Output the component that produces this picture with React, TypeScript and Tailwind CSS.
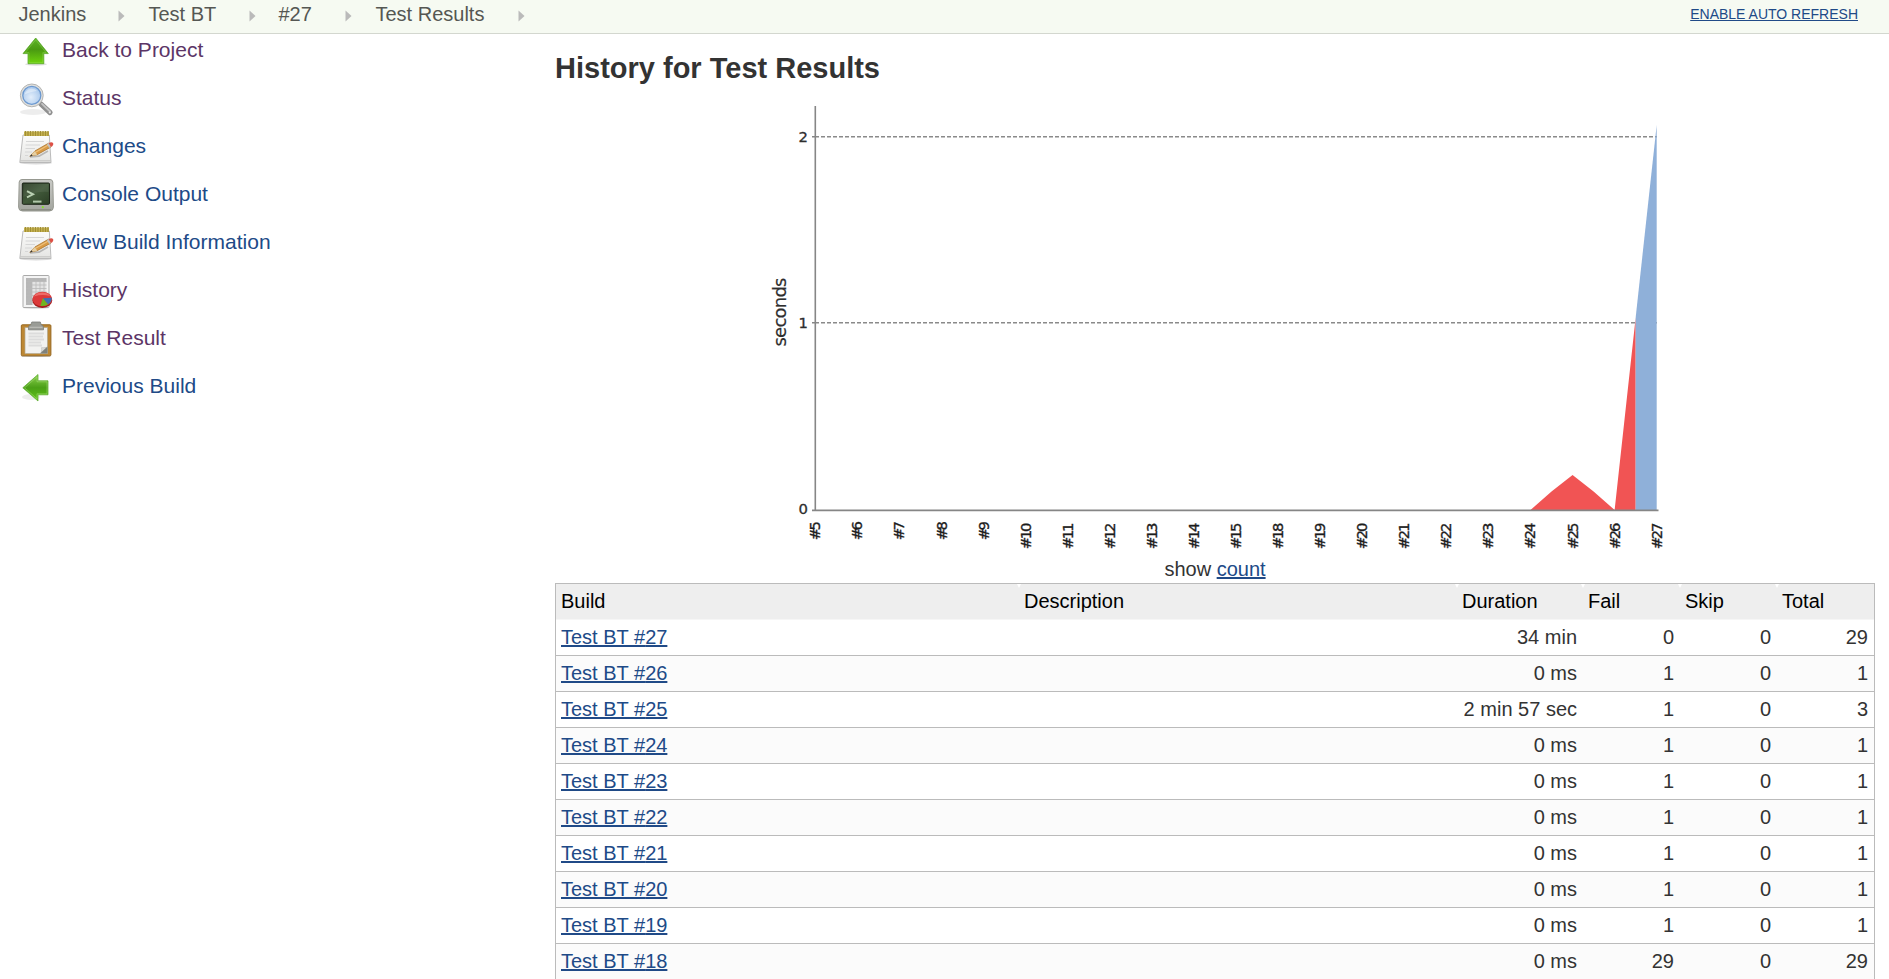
import type { ReactNode } from "react";

interface Build {
  id: number;
  duration: string;
  fail: number;
  skip: number;
  total: number;
}

const builds: Build[] = [
  { id: 27, duration: "34 min", fail: 0, skip: 0, total: 29 },
  { id: 26, duration: "0 ms", fail: 1, skip: 0, total: 1 },
  { id: 25, duration: "2 min 57 sec", fail: 1, skip: 0, total: 3 },
  { id: 24, duration: "0 ms", fail: 1, skip: 0, total: 1 },
  { id: 23, duration: "0 ms", fail: 1, skip: 0, total: 1 },
  { id: 22, duration: "0 ms", fail: 1, skip: 0, total: 1 },
  { id: 21, duration: "0 ms", fail: 1, skip: 0, total: 1 },
  { id: 20, duration: "0 ms", fail: 1, skip: 0, total: 1 },
  { id: 19, duration: "0 ms", fail: 1, skip: 0, total: 1 },
  { id: 18, duration: "0 ms", fail: 29, skip: 0, total: 29 },
];

const chartBuilds = [5, 6, 7, 8, 9, 10, 11, 12, 13, 14, 15, 18, 19, 20, 21, 22, 23, 24, 25, 26, 27];

function Icon({ children }: { children: ReactNode }) {
  return (
    <svg width="36" height="36" viewBox="0 0 36 36" className="shrink-0">
      {children}
    </svg>
  );
}

function UpIcon() {
  return (
    <Icon>
      <defs>
        <linearGradient id="up" x1="0" y1="0" x2="0" y2="1">
          <stop offset="0" stopColor="#5fb52a" />
          <stop offset="0.45" stopColor="#4a9a12" />
          <stop offset="1" stopColor="#6fd40c" />
        </linearGradient>
      </defs>
      <ellipse cx="18" cy="31.2" rx="11" ry="1.5" fill="#000" opacity="0.13" />
      <path d="M17.7 5 L30.3 20.6 H25.8 V30.7 H10 V20.6 H5 Z" fill="url(#up)" stroke="#5aa82a" strokeWidth="0.8" strokeLinejoin="round" />
      <path d="M17.7 6.8 L28 19.6 H24.8 V29.7 H11 V19.6 H7.3 Z" fill="none" stroke="#a2e26a" strokeWidth="0.7" opacity="0.5" />
    </Icon>
  );
}

function SearchIcon() {
  return (
    <Icon>
      <defs>
        <radialGradient id="lens" cx="0.45" cy="0.6" r="0.6">
          <stop offset="0" stopColor="#e3eefb" />
          <stop offset="1" stopColor="#a9c8ec" />
        </radialGradient>
      </defs>
      <ellipse cx="15" cy="31" rx="13" ry="3" fill="#000" opacity="0.07" />
      <path d="M22.5 22.7 L32 31.5" stroke="#8f8f8f" strokeWidth="5.2" strokeLinecap="round" />
      <path d="M24 22.8 L32 30.5" stroke="#c4c4c4" strokeWidth="1.8" strokeLinecap="round" />
      <circle cx="31.8" cy="31.5" r="1.1" fill="#e6e6e6" />
      <circle cx="13.8" cy="14.4" r="11.4" fill="#e0e0de" stroke="#b4b4b2" strokeWidth="1" />
      <circle cx="13.8" cy="14.4" r="9" fill="url(#lens)" stroke="#6c99d0" strokeWidth="1.3" />
      <path d="M6.8 13.4 C8 7.9 15 5.9 19 9.9 C15 10.4 10 11.4 6.8 13.4 Z" fill="#fff" opacity="0.4" />
    </Icon>
  );
}

function NotepadIcon() {
  return (
    <Icon>
      <defs>
        <linearGradient id="pad" x1="0" y1="0" x2="0" y2="1">
          <stop offset="0" stopColor="#fcfcfb" />
          <stop offset="1" stopColor="#e4e4e2" />
        </linearGradient>
      </defs>
      <ellipse cx="18" cy="34" rx="16" ry="1.5" fill="#000" opacity="0.15" />
      <path d="M5 6 H31.3 L33 33.5 H1.8 Z" fill="url(#pad)" stroke="#b4b4b4" strokeWidth="0.9" strokeLinejoin="round" />
      <path d="M2.2 31.8 H32.8" stroke="#c5c5c3" strokeWidth="1.1" />
      <path d="M8 12.5 H26 M7.5 16 H22 M7.5 19.5 H17 M7 23 H14 M7 26.5 H10" stroke="#d6d6d6" strokeWidth="1.1" />
      <path d="M6 2.5 H31 V7 H6 Z" fill="#c9b553" />
      <path d="M7.5 2 V7 M10 2 V7 M12.5 2 V7 M15 2 V7 M17.5 2 V7 M20 2 V7 M22.5 2 V7 M25 2 V7 M27.5 2 V7 M30 2 V7" stroke="#a08e33" strokeWidth="1.2" />
      <path d="M12 27.9 L21 27.2 L30 22" stroke="#000" strokeWidth="1.8" fill="none" opacity="0.22" />
      <path d="M11.8 27.2 L17 21.9 L30.8 14 L33 18 L19.2 25.7 Z" fill="#d99a45" stroke="#a56d22" strokeWidth="0.7" strokeLinejoin="round" />
      <path d="M18 22.9 L31.2 15.4" stroke="#efc27c" strokeWidth="1.1" />
      <path d="M11.8 27.2 L17 21.9 L19.2 25.7 Z" fill="#e6cfa2" />
      <path d="M11.6 27.4 L13.6 25.2 L14.6 26.7 Z" fill="#333" />
      <path d="M28.9 15.1 L30.8 14 L33 18 L31.1 19 Z" fill="#c2c2c2" />
      <path d="M30.8 14 Q33.8 12.3 35.2 14.2 Q35.8 16.5 33 18 Z" fill="#dd5046" />
    </Icon>
  );
}

function TerminalIcon() {
  return (
    <Icon>
      <defs>
        <linearGradient id="screen" x1="0" y1="0" x2="1" y2="1">
          <stop offset="0" stopColor="#2a3a24" />
          <stop offset="0.5" stopColor="#41593a" />
          <stop offset="1" stopColor="#2b3e25" />
        </linearGradient>
        <linearGradient id="bezel" x1="0" y1="0" x2="0" y2="1">
          <stop offset="0" stopColor="#c9cac6" />
          <stop offset="1" stopColor="#a3a59f" />
        </linearGradient>
      </defs>
      <path d="M4 2.5 H32 Q34.5 2.5 34.8 5 L35.4 30 Q35.4 34 31.5 34 H4.5 Q0.6 34 0.6 30 L1.2 5 Q1.5 2.5 4 2.5 Z" fill="url(#bezel)" stroke="#969890" strokeWidth="1" />
      <path d="M3 32.8 H33" stroke="#84867d" strokeWidth="1.1" />
      <rect x="4.3" y="6" width="27.2" height="21.3" rx="1" fill="url(#screen)" stroke="#1c2418" strokeWidth="1" />
      <path d="M5.5 7 H30.5 V15 Q18 14 5.5 20 Z" fill="#fff" opacity="0.07" />
      <path d="M9 14.2 L15 17.3 L9 20.4" fill="none" stroke="#b9cfb2" strokeWidth="2" />
      <path d="M15 24.6 H23.5" stroke="#b0c7a9" strokeWidth="2" />
      <circle cx="24.8" cy="30.2" r="1.1" fill="#83dc2c" />
    </Icon>
  );
}

function HistoryIcon() {
  return (
    <Icon>
      <ellipse cx="18" cy="34.8" rx="13" ry="1" fill="#000" opacity="0.15" />
      <rect x="5" y="2.5" width="26" height="32" rx="0.8" fill="#f4f4f4" stroke="#aaa" />
      <rect x="8" y="5" width="20.5" height="27" fill="#e3e3e3" />
      <path d="M8 5 H28.5 V8.5 H8 Z M8 8.5 H14 V32 H8 Z" fill="#a3a3a3" opacity="0.7" />
      <path d="M8 8.5 H28.5 M8 12 H28.5 M8 15.5 H28.5 M8 19 H28.5 M8 22.5 H28.5 M8 26 H28.5 M8 29.5 H28.5 M11 5 V32 M14 5 V32 M18 5 V32 M22 5 V32 M26 5 V32" stroke="#b9b9b9" strokeWidth="0.8" />
      <ellipse cx="24.3" cy="27.6" rx="9.9" ry="7.4" fill="#a51c1c" />
      <ellipse cx="24.3" cy="26" rx="9.7" ry="7.3" fill="#dc3a3a" />
      <path d="M16 23.5 Q18 19.3 25 19.5 Q31 20 32 23 Q24 21 16 23.5 Z" fill="#ff9b94" opacity="0.5" />
      <path d="M24.8 25.2 L33.8 24.8 Q34 28.7 30 31.5 Z" fill="#3e6fb4" />
      <path d="M24.8 25.2 L30 31.5 Q26.5 33.4 22.3 33 Z" fill="#6fb51f" />
    </Icon>
  );
}

function ClipboardIcon() {
  return (
    <Icon>
      <ellipse cx="18" cy="35.2" rx="15" ry="0.8" fill="#000" opacity="0.25" />
      <rect x="3.3" y="3.8" width="29.6" height="31" rx="1" fill="#bd8733" stroke="#96671f" />
      <rect x="7" y="6.6" width="22.5" height="26" fill="#f2f2f1" stroke="#b2a88f" strokeWidth="0.7" />
      <path d="M10.5 12.5 H26 M10.5 15.5 H25 M10.5 18.5 H26 M10.5 21.5 H23 M10.5 24.5 H24" stroke="#dcdcdc" strokeWidth="2" />
      <path d="M22 32.6 Q24.5 30 23.5 26.5 Q27 27.5 29.5 25.5 V32.6 Z" fill="#7f817b" />
      <path d="M22 32.6 Q24.5 30 23.5 26.5 Q27 27.5 29.5 25.5 Z" fill="#d8d8d6" />
      <path d="M13.8 1 H22.3 L23.2 3.8 Q25.5 4.2 25.5 6.5 V8.8 H10.5 V6.5 Q10.5 4.2 12.8 3.8 Z" fill="#9a9c96" stroke="#7c7e78" strokeWidth="0.8" />
      <path d="M11.5 6.3 H24.5" stroke="#bdbfb9" strokeWidth="1.1" />
    </Icon>
  );
}

function LeftIcon() {
  return (
    <Icon>
      <defs>
        <linearGradient id="left" x1="0" y1="0" x2="0" y2="1">
          <stop offset="0" stopColor="#8bd04f" />
          <stop offset="0.5" stopColor="#4a9f16" />
          <stop offset="1" stopColor="#62c518" />
        </linearGradient>
      </defs>
      <ellipse cx="13" cy="28" rx="9" ry="3" fill="#000" opacity="0.07" />
      <path d="M4.8 18.8 L20 5.5 V11.8 H30 V25.8 H20 V32 Z" fill="url(#left)" stroke="#65b038" strokeWidth="0.8" strokeLinejoin="round" />
      <path d="M6.6 18.8 L19 7.8 V12.8 H29 V24.8 H19 V29.8 Z" fill="none" stroke="#b4ea86" strokeWidth="0.7" opacity="0.6" />
    </Icon>
  );
}

const tasks = [
  { label: "Back to Project", icon: <UpIcon />, visited: true },
  { label: "Status", icon: <SearchIcon />, visited: true },
  { label: "Changes", icon: <NotepadIcon />, visited: false },
  { label: "Console Output", icon: <TerminalIcon />, visited: false },
  { label: "View Build Information", icon: <NotepadIcon />, visited: false },
  { label: "History", icon: <HistoryIcon />, visited: true },
  { label: "Test Result", icon: <ClipboardIcon />, visited: true },
  { label: "Previous Build", icon: <LeftIcon />, visited: false },
];

function Crumb({ label, className }: { label: string; className: string }) {
  return (
    <li className={`flex items-center justify-between ${className}`}>
      <a href="#">{label}</a>
      <svg width="7" height="12" viewBox="0 0 7 12" className="mt-[3px]">
        <path d="M0.5 0.5 L6.5 6 L0.5 11.5 Z" fill="#bababa" />
      </svg>
    </li>
  );
}

function DurationChart() {
  const x = (i: number) => 50.3 + i * 42.07;

  return (
    <svg width="900" height="450" viewBox="0 0 900 450" className="font-['DejaVu_Sans']">
      <path d="M50 31.7 H892 M50 217.7 H892" stroke="#8a8a8a" strokeWidth="1.4" strokeDasharray="4 2" />
      <path
        d={`M${x(17)} 405 L${x(17.5)} 386.5 L${x(18)} 370 L${x(18.5)} 386.5 L${x(19)} 405 L${x(19.5)} 212.5 V405 Z`}
        fill="#f15454"
      />
      <path d={`M${x(19.5)} 405 V212.5 L${x(20)} 20 V405 Z`} fill="#8fb0d9" />
      <path d="M50.3 1 V405.5 M47 405.4 H893.5 M47 31.7 H51 M47 217.7 H51" stroke="#868686" strokeWidth="1.6" fill="none" />
      <g fontSize="14.8" fill="#2e2e2e" stroke="#2e2e2e" strokeWidth="0.3" textAnchor="end">
        <text x="43" y="37.2">2</text>
        <text x="43" y="223.2">1</text>
        <text x="43" y="409">0</text>
      </g>
      <text
        transform="translate(20.5 241.5) rotate(-90)"
        fontSize="18"
        textLength="69"
        fill="#2e2e2e"
        stroke="#2e2e2e"
        strokeWidth="0.2"
      >
        seconds
      </text>
      {chartBuilds.map((n, i) => (
        <text
          key={n}
          transform={`translate(${x(i) + 5} ${n < 10 ? 435.3 : 444.3}) rotate(-90)`}
          fontSize="14.8"
          textLength={n < 10 ? 19.2 : 26.8}
          fill="#1c1c1c"
          stroke="#1c1c1c"
          strokeWidth="0.35"
        >
          #{n}
        </text>
      ))}
    </svg>
  );
}

function HeadCell({ children, notch = true, className }: { children: ReactNode; notch?: boolean; className: string }) {
  return (
    <th className={`relative border-b border-[#f6f6f6] bg-[#eee] p-0 pb-px pl-[5px] text-left font-normal text-black ${className}`}>
      {notch && (
        <span className="absolute -left-0.5 top-0 border-x-2 border-t-4 border-x-transparent border-t-white" />
      )}
      {children}
    </th>
  );
}

export default function App() {
  return (
    <div className="h-[979px] overflow-hidden bg-white font-['Liberation_Sans',Arial,sans-serif] text-xl leading-6 text-[#333]">
      <header className="flex h-[34px] items-start justify-between border-b border-[#d3d7cf] bg-[#f6faf2] pl-[18.5px] pr-[31px]">
        <ul className="flex pt-[2px] text-[#555753]">
          <Crumb label="Jenkins" className="mr-6 w-[106px]" />
          <Crumb label="Test BT" className="mr-[23px] w-[107px]" />
          <Crumb label="#27" className="mr-6 w-[73px]" />
          <Crumb label="Test Results" className="w-[149px]" />
        </ul>
        <a href="#" className="pt-[2px] text-sm leading-6 text-[#204a87] underline">ENABLE AUTO REFRESH</a>
      </header>

      <div className="flex">
        <nav className="flex w-[555px] flex-col gap-3 pl-[18px] text-[21px]">
          {tasks.map(task => (
            <a
              key={task.label}
              href="#"
              className={`flex h-9 items-start gap-2 ${task.visited ? "text-[#5c3566]" : "text-[#204a87]"}`}
            >
              <span className="-mt-px">{task.icon}</span>
              <span className="pt-1">{task.label}</span>
            </a>
          ))}
        </nav>

        <main className="w-[1320px]">
          <h1 className="mt-[17px] text-[29px] font-bold leading-[34px]">History for Test Results</h1>
          <div className="mt-5 h-[450px] pl-[210px]">
            <DurationChart />
          </div>
          <div className="h-[28px] pt-0.5 text-center">
            show <a href="#" className="text-[#204a87] underline">count</a>
          </div>

          <table className="w-full table-fixed border-separate border-spacing-0 border border-[#bbb]">
            <thead>
              <tr className="h-9">
                <HeadCell className="w-[463px]" notch={false}>Build</HeadCell>
                <HeadCell className="w-[438px]">Description</HeadCell>
                <HeadCell className="w-[126px]">Duration</HeadCell>
                <HeadCell className="w-[97px]">Fail</HeadCell>
                <HeadCell className="w-[97px]">Skip</HeadCell>
                <HeadCell className="w-[97px]">Total</HeadCell>
              </tr>
            </thead>
            <tbody>
              {builds.map(b => (
                <tr key={b.id} className="h-9 even:bg-[#fbfbfb] [&>td]:border-b [&>td]:border-[#bbb] [&>td]:p-0 [&>td]:pb-px [&>td]:pl-[5px] [&>td]:pr-1.5">
                  <td>
                    <a href="#" className="text-[#204a87] underline">Test BT #{b.id}</a>
                  </td>
                  <td />
                  <td className="text-right">{b.duration}</td>
                  <td className="text-right">{b.fail}</td>
                  <td className="text-right">{b.skip}</td>
                  <td className="text-right">{b.total}</td>
                </tr>
              ))}
            </tbody>
          </table>
        </main>
      </div>
    </div>
  );
}
